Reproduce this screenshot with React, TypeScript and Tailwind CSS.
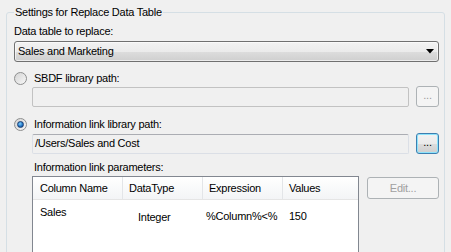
import React from "react";

function Radio({ checked }: { checked?: boolean }) {
  return (
    <span className="relative flex h-[13px] w-[13px] shrink-0 items-center justify-center rounded-full border border-[#8e8f8f] bg-[linear-gradient(135deg,#d4d4d4,#f7f7f7)]">
      {checked && (
        <span className="h-[7px] w-[7px] rounded-full border border-[#1b3f73] bg-[radial-gradient(circle_at_40%_35%,#7fd2ff,#1f6fc0_60%,#0d3d7a)]" />
      )}
    </span>
  );
}

export default function App() {
  return (
    <div
      className="h-[252px] w-[451px] overflow-hidden bg-[#f0f0f0] px-[6px] pt-[6px] text-[11px] leading-[13px] tracking-[-0.25px] text-black"
      style={{ fontFamily: '"Liberation Sans", Arial, sans-serif' }}
    >
      <fieldset className="h-[300px] rounded-[3px] border border-[#d5dfe5] pl-[7px] pr-[5px] pt-[6px]">
        <legend className="px-[1px]">Settings for Replace Data Table</legend>

        <div>Data table to replace:</div>
        <div className="mt-[3px] flex h-[21px] items-center justify-between rounded-[3px] border border-[#707070] bg-[linear-gradient(#f2f2f2_0%,#ebebeb_50%,#dddddd_51%,#cfcfcf_100%)] pl-[3px] pr-[4px] shadow-[inset_0_0_0_1px_rgba(255,255,255,0.6)]">
          <span>Sales and Marketing</span>
          <svg width="8" height="5" viewBox="0 0 8 5">
            <path d="M0 0h8L4 4.5z" fill="#000" />
          </svg>
        </div>

        <div className="mt-[10px] flex h-[13px] items-center gap-[7px]">
          <Radio />
          <span>SBDF library path:</span>
        </div>
        <div className="mt-[1px] flex items-center gap-[7px] pl-[18px]">
          <div className="h-[20px] flex-1 rounded-[2px] border border-[#c2c2c2] bg-[#f0f0f0]" />
          <div className="flex h-[21px] w-[23px] items-center justify-center rounded-[3px] border border-[#adb2b5] bg-[#f4f4f4] pb-[3px] text-[#9a9a9a]">
            ...
          </div>
        </div>

        <div className="mt-[11px] flex h-[13px] items-center gap-[7px]">
          <Radio checked />
          <span>Information link library path:</span>
        </div>
        <div className="mt-[2px] flex items-center gap-[7px] pl-[18px]">
          <div className="flex h-[20px] flex-1 items-center rounded-[2px] border border-[#dbdfe6] border-t-[#abadb3] bg-[#f0f0f0] pl-[2px]">
            /Users/Sales and Cost
          </div>
          <div className="flex h-[21px] w-[23px] items-center justify-center rounded-[3px] border border-[#3c7fb1] bg-[linear-gradient(#f2f2f2_0%,#ebebeb_50%,#dddddd_51%,#cfcfcf_100%)] pb-[3px] shadow-[inset_0_0_0_1px_#8ee3fb]">
            ...
          </div>
        </div>

        <div className="mt-[7px] pl-[20px]">Information link parameters:</div>
        <div className="mt-[2px] flex items-start gap-[8px] pl-[18px]">
          <div className="h-[90px] w-[327px] border border-[#828790] bg-white">
            <div className="flex h-[23px] items-center border-b border-[#e5e5e5] bg-[linear-gradient(#ffffff,#f3f4f6)]">
              <div className="flex h-full w-[90px] items-center border-r border-[#e3e5e8] pl-[7px]">Column Name</div>
              <div className="flex h-full w-[80px] items-center border-r border-[#e3e5e8] pl-[6px]">DataType</div>
              <div className="flex h-full w-[80px] items-center border-r border-[#e3e5e8] pl-[6px]">Expression</div>
              <div className="flex h-full flex-1 items-center pl-[6px]">Values</div>
            </div>
            <div className="flex">
              <div className="w-[90px] pl-[7px] pt-[6px]">Sales</div>
              <div className="w-[80px] pl-[15px] pt-[11px]">Integer</div>
              <div className="w-[80px] pl-[3px] pt-[10px]">%Column%&lt;%</div>
              <div className="flex-1 pl-[6px] pt-[10px]">150</div>
            </div>
          </div>
          <div className="mt-[1px] flex h-[22px] w-[72px] items-center justify-center rounded-[3px] border border-[#adb2b5] bg-[#f4f4f4] text-[#a0a0a0]">
            Edit...
          </div>
        </div>
      </fieldset>
    </div>
  );
}
